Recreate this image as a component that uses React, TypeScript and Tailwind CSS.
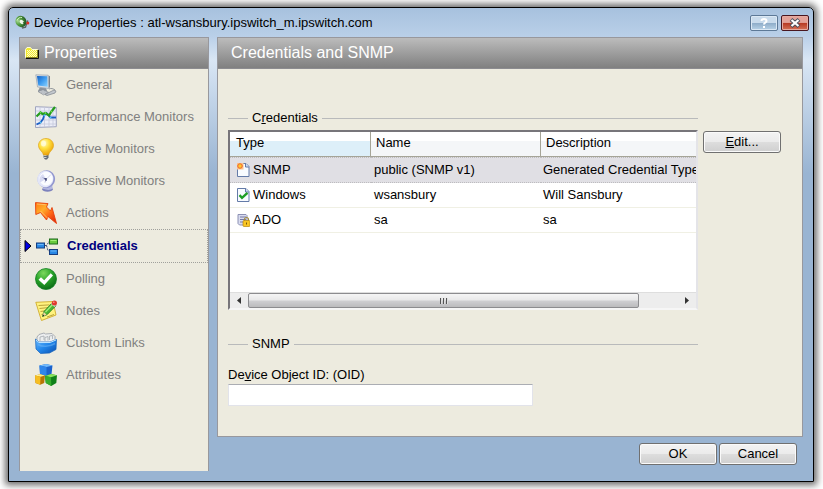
import type { ReactNode } from "react";

function AppIcon() {
  return (
    <svg className="h-[15px] w-[15px]" viewBox="0 0 15 15" aria-hidden="true">
      <defs>
        <radialGradient id="bell" cx="30%" cy="30%" r="80%">
          <stop offset="0" stopColor="#a8d894" />
          <stop offset="0.4" stopColor="#55a043" />
          <stop offset="1" stopColor="#1b4d1c" />
        </radialGradient>
      </defs>
      <ellipse cx="6" cy="6.500" rx="5.400" ry="5.800" transform="rotate(-35 6 6.500)" fill="url(#bell)" />
      <path d="M2 5.500C3 3 5 2 7 2.500" fill="none" stroke="#cfeec2" />
      <ellipse cx="6.800" cy="7" rx="2.400" ry="1.800" transform="rotate(35 6.800 7)" fill="#f0f8ec" />
      <path d="M8 7.500l2.500 1.500" stroke="#235c22" strokeWidth="1.200" />
      <path d="M7 13l3.500-.8L11.500 9l1.300-3.500" fill="none" stroke="#59645e" strokeWidth="1.300" />
      <circle cx="12.800" cy="8" r="1.500" fill="#e02c20" />
    </svg>
  );
}

function FolderIcon() {
  return (
    <svg className="h-3 w-[14px]" viewBox="0 0 14 12" aria-hidden="true">
      <path d="M13.500 3v8.500H1" fill="none" stroke="#111" />
      <path d="M.5 10.500v-8l1.500-2h3.500l1.500 2h5.500v8z" fill="#f2ea2e" stroke="#fdfdd8" />
      <path d="M2 3.500h10M2 5.500h10M2 7.500h10M2 9.500h10" stroke="#fffcc8" strokeDasharray="1 1" />
      <path d="M3 4.500h9M3 6.500h9M3 8.500h9" stroke="#fffcc8" strokeDasharray="1 1" />
      <path d="M1 10.500h11.500v-7.500" fill="none" stroke="#85801a" />
    </svg>
  );
}

function ComputerIcon() {
  return (
    <svg className="h-[22px] w-[22px]" viewBox="0 0 22 22" aria-hidden="true">
      <defs>
        <linearGradient id="screen" x1="0" y1="0" x2="1" y2="1">
          <stop offset="0" stopColor="#1461c4" />
          <stop offset="0.5" stopColor="#3f9df0" />
          <stop offset="1" stopColor="#8ed4ff" />
        </linearGradient>
      </defs>
      <path d="M5 13l6 1 1 3-4 2-5-2z" fill="#8b939c" />
      <path d="M13.500 1.500l1.500.8v11l-1.500 1z" fill="#76808b" />
      <path d="M.8.800l12.400.4.600 13.300L2.500 13z" fill="#d8dde4" stroke="#a1a9b3" strokeWidth=".8" />
      <path d="M2 2l10.300.3.400 10.500L3.300 11.500z" fill="url(#screen)" />
      <path d="M3 17.500l5-1.800 5.500 2.600-5 2.500z" fill="#d9dce0" stroke="#858b94" strokeWidth=".8" />
      <path d="M4.500 17.500l5 2.300M6 17l5 2.300M7.500 16.500l5 2.200" stroke="#9aa1aa" strokeWidth=".6" />
      <path d="M10 20.500l9-4.500 2 1-1 2-8 2.500z" fill="#c3c8ce" stroke="#868c94" strokeWidth=".8" />
      <path d="M14 15c2-1 4-.5 6 1" fill="none" stroke="#7d848c" strokeWidth=".8" />
    </svg>
  );
}

function ChartIcon() {
  return (
    <svg className="h-[22px] w-[22px]" viewBox="0 0 22 22" aria-hidden="true">
      <path d="M.5.700l20.800.8v19.200L.5 21.500z" fill="#eceef8" stroke="#9fa4be" />
      <path d="M5 1v20M9.500 1v20M14 1v20M18 1v20M1 5h20M1 9.500h20M1 14h20M1 18h20" stroke="#c5c8dc" strokeWidth=".8" />
      <path d="M1.500 18.500l4-2 2.500-3.500 1.500-4.500 2-1.500 4 4.500h5.500" fill="none" stroke="#185dc4" strokeWidth="1.800" />
      <path d="M1.500 10.500l4-4 2 1.500 3-1 3.500 2.500 2.500-4 3.500-4.500" fill="none" stroke="#259b1c" strokeWidth="2.200" />
      <g fill="#55c6f4">
        <circle cx="5.500" cy="16.500" r=".9" /><circle cx="9.500" cy="9.500" r=".9" /><circle cx="15.500" cy="11.500" r=".9" />
      </g>
      <g fill="#6ede4e">
        <circle cx="5.500" cy="6.500" r=".9" /><circle cx="10.500" cy="7" r=".9" /><circle cx="16.500" cy="5.500" r=".9" />
      </g>
    </svg>
  );
}

function BulbIcon() {
  return (
    <svg className="h-[22px] w-[22px]" viewBox="0 0 22 22" aria-hidden="true">
      <defs>
        <radialGradient id="glass" cx="38%" cy="28%" r="75%">
          <stop offset="0" stopColor="#fffbc8" />
          <stop offset="0.45" stopColor="#ffe03c" />
          <stop offset="1" stopColor="#eb9c06" />
        </radialGradient>
      </defs>
      <path d="M8.500 16h5v3.500l-1.500 2h-2l-1.500-2z" fill="#636b76" />
      <path d="M8.500 17.500h3M8.500 19.500h3" stroke="#d4d9df" strokeWidth=".9" />
      <path d="M11 .5c4.300 0 7.500 3 7.500 7 0 3.300-2.500 5-4 7.200-.6 1-.8 2.300-1.200 2.300H8.700c-.4 0-.6-1.300-1.200-2.300-1.500-2.200-4-3.900-4-7.200 0-4 3.200-7 7.500-7z" fill="url(#glass)" stroke="#dfa51a" strokeWidth=".7" />
      <ellipse cx="8.500" cy="5.500" rx="2.500" ry="3" fill="#fffde0" opacity=".75" />
    </svg>
  );
}

function DishIcon() {
  return (
    <svg className="h-[22px] w-[22px]" viewBox="0 0 22 22" aria-hidden="true">
      <ellipse cx="12.500" cy="19.200" rx="5.300" ry="2.500" fill="#7d82bd" />
      <path d="M8 16l9-1 .8 3.500c-2 1.800-6 1.800-9.800.3z" fill="#b4b8e0" />
      <ellipse cx="11.300" cy="9.200" rx="8.700" ry="9" transform="rotate(25 11.300 9.200)" fill="#9297cf" />
      <ellipse cx="10.300" cy="9" rx="8" ry="8.300" transform="rotate(25 10.300 9)" fill="#e3e6f8" />
      <ellipse cx="11" cy="8.600" rx="6.600" ry="6.900" transform="rotate(25 11 8.600)" fill="#fbfcff" />
      <path d="M5 12.500A6.500 6.500 0 0 1 8 4L11 9z" fill="#d9dcf3" />
      <path d="M11 9.500l5-5" stroke="#c9cce4" strokeWidth=".8" />
      <path d="M7.500 7.500l3.500 2-1 3" fill="none" stroke="#9a9ec8" strokeWidth=".8" />
      <path d="M9 8h2.800v2.800H10.500z" fill="#4d5280" />
    </svg>
  );
}

function BoltIcon() {
  return (
    <svg className="h-[22px] w-[22px]" viewBox="0 0 22 22" aria-hidden="true">
      <defs>
        <linearGradient id="bolt" x1="0" y1="0" x2="1" y2="1">
          <stop offset="0" stopColor="#ff7a10" />
          <stop offset="0.35" stopColor="#ffad2b" />
          <stop offset="0.6" stopColor="#ff6a17" />
          <stop offset="1" stopColor="#d91b08" />
        </linearGradient>
      </defs>
      <path d="M.5.600l12.500 1-1.500 3.400 4 4 1.500-3.500 4.500 16-8.500-7L11.500 18 5.500 10.500.8 12.500z" fill="url(#bolt)" stroke="#e5400b" strokeWidth=".9" />
      <path d="M2 2l8.500.7M5.500 9L12.500 16" fill="none" stroke="#ffc878" strokeWidth=".8" />
    </svg>
  );
}

function NodesIcon() {
  return (
    <svg className="h-[22px] w-[22px]" viewBox="0 0 22 22" aria-hidden="true">
      <path d="M9 10.500h1.500L13.500 6M10.500 10.500l1.500 5 2 1" fill="none" stroke="#3c4a72" strokeDasharray="2 1" />
      <rect x=".5" y="8" width="8" height="5" fill="#2987e5" stroke="#163e80" />
      <path d="M1.500 9.500h6" stroke="#6bb7f8" />
      <rect x="13.500" y="4" width="8" height="5" fill="#68ca3e" stroke="#1d6b1d" />
      <path d="M14.500 5.500h6" stroke="#a2ee77" />
      <rect x="13.500" y="14.500" width="8" height="5" fill="#2987e5" stroke="#163e80" />
      <path d="M14.500 16h6" stroke="#6bb7f8" />
    </svg>
  );
}

function CheckIcon() {
  return (
    <svg className="h-[22px] w-[22px]" viewBox="0 0 22 22" aria-hidden="true">
      <defs>
        <radialGradient id="ball" cx="38%" cy="22%" r="80%">
          <stop offset="0" stopColor="#7cd85e" />
          <stop offset="0.5" stopColor="#2ba52a" />
          <stop offset="1" stopColor="#0b6c16" />
        </radialGradient>
      </defs>
      <circle cx="11" cy="11" r="10.500" fill="url(#ball)" stroke="#128024" strokeWidth=".8" />
      <path d="M3.500 11.800L6 9.300l3.200 3 6.500-7 2.300 2.300-8.700 9.300z" fill="#fff" />
    </svg>
  );
}

function NoteIcon() {
  return (
    <svg className="h-[22px] w-[22px]" viewBox="0 0 22 22" aria-hidden="true">
      <path d="M.8 2.300L18 1.500 21 15 6.500 20.500 5 16z" fill="#fff27e" stroke="#cfac2c" strokeWidth=".9" />
      <path d="M3.500 5.500l11-.6M4.500 8.500l8.500-.9M5.500 11.500l5-.8M6.500 14.500l2-.5M12 17l7-2.500" stroke="#a88f29" strokeWidth=".8" />
      <path d="M7.500 16.500l1.500-5 8.500-9 3.500 3.200-9 9z" fill="#4bb733" stroke="#1d761c" strokeWidth=".8" />
      <path d="M10.500 12l7.500-8" stroke="#a3ee7b" strokeWidth="1.200" />
      <path d="M7.500 16.500l1.300-4.500 2.800 2.700z" fill="#eed7a6" />
      <path d="M7.500 16.500l.6-2 1.300 1.300z" fill="#222" />
      <path d="M16 3.800l1.500-1.500 3.400 3.200-1.500 1.500z" fill="#d7dcdf" />
      <ellipse cx="19.400" cy="2.900" rx="2.600" ry="2.500" fill="#e03a2d" />
      <circle cx="18.800" cy="2.200" r=".8" fill="#f9a095" />
    </svg>
  );
}

function BinIcon() {
  return (
    <svg className="h-[22px] w-[22px]" viewBox="0 0 22 22" aria-hidden="true">
      <defs>
        <linearGradient id="bin" x1="0" y1="0" x2="1" y2="1">
          <stop offset="0" stopColor="#6dbcff" />
          <stop offset="0.5" stopColor="#2186ea" />
          <stop offset="1" stopColor="#0b4ead" />
        </linearGradient>
      </defs>
      <path d="M2 5l2-2.500 5-1.500 1.500 1L17 1.500l3 3v7H2z" fill="#eceeef" stroke="#989da4" strokeWidth=".8" />
      <path d="M5 9V5l4-1v4M10 9V5.500l3-1v4M14.500 8V4l3-.5V7" fill="none" stroke="#a5a9af" strokeWidth=".8" />
      <path d="M.5 7L4 10h11l6.500-2.500-.5 10-6.500 3.500-9 .5L1 17z" fill="url(#bin)" stroke="#1763ba" strokeWidth=".7" />
      <path d="M1 8l3 2.500h11l6-2.500" fill="none" stroke="#bce3ff" />
      <path d="M3 12.500c4 2.500 11 2.500 17-1" fill="none" stroke="#73baf8" strokeWidth="1.500" opacity=".5" />
    </svg>
  );
}

function CubesIcon() {
  return (
    <svg className="h-[22px] w-[22px]" viewBox="0 0 22 22" aria-hidden="true">
      <path d="M4.500 1.500L11 0l6.500 1.500-1 8.500-5 2.500L5 10z" fill="#1b62cc" />
      <path d="M4.500 1.500L11 0l6.500 1.500-6 1.500z" fill="#73bafa" />
      <path d="M4.500 1.500l7 1.500v9.500L5 10z" fill="#2f86ea" />
      <path d="M0 11.500l5-1.300 5 1.300-.8 7.500-4 1.800L.5 19z" fill="#b87405" />
      <path d="M0 11.500l5-1.300 5 1.300-4.500 1.200z" fill="#fff08a" />
      <path d="M0 11.500l5.500 1.200-.3 8.100L.5 19z" fill="#f6be22" />
      <path d="M10 12l6-2 6 1.300-.7 7.700-5 3-5.500-3z" fill="#108018" />
      <path d="M10 12l6-2 6 1.300-6 2z" fill="#8be35c" />
      <path d="M10 12l6 1.300.3 8.700-5.500-3z" fill="#37ad2b" />
    </svg>
  );
}

function TypeIcon({ kind }: { kind: string }) {
  if (kind === "ADO") {
    return (
      <svg className="h-[14px] w-[13px] shrink-0" viewBox="0 0 13 14" aria-hidden="true">
        <path d="M1 1.500h8l1 1V12H2.500L1 10.500z" fill="#d9dcef" stroke="#8c90b4" />
        <path d="M3 4h6M3 6.500h6M3 9h4" stroke="#7479a4" />
        <path d="M7.500 8V6.500a2 2 0 0 1 4 0V8" fill="none" stroke="#a38c3d" strokeWidth="1.200" />
        <rect x="6" y="7.500" width="7" height="6" rx="1" fill="#f9c522" stroke="#b8880e" strokeWidth=".7" />
        <path d="M9.500 9.500v2" stroke="#775709" />
      </svg>
    );
  }
  return (
    <svg className="h-[14px] w-[13px] shrink-0" viewBox="0 0 13 14" aria-hidden="true">
      <path d="M.5.500h8.500l3 3v10H.5z" fill="#f8fbff" stroke="#647ba8" />
      <path d="M8.500.500v3.500H12" fill="#cfdcf2" stroke="#647ba8" />
      {kind === "SNMP" ? (
        <g>
          <path d="M0 0h6.500v6.500H0z" fill="#fbc58c" />
          <path d="M3 0v6M0 3h6M1 1l4 4M5 1L1 5" stroke="#ef7136" strokeWidth="1.400" />
          <circle cx="3" cy="3" r="1.700" fill="#ffc92c" />
        </g>
      ) : (
        <path d="M2.500 7.200l2.500 2.600 5.500-5" fill="none" stroke="#1e9e25" strokeWidth="2.400" />
      )}
    </svg>
  );
}

type NavItem = { label: string; icon: ReactNode; current?: boolean };

const navItems: NavItem[] = [
  { label: "General", icon: <ComputerIcon /> },
  { label: "Performance Monitors", icon: <ChartIcon /> },
  { label: "Active Monitors", icon: <BulbIcon /> },
  { label: "Passive Monitors", icon: <DishIcon /> },
  { label: "Actions", icon: <BoltIcon /> },
  { label: "Credentials", icon: <NodesIcon />, current: true },
  { label: "Polling", icon: <CheckIcon /> },
  { label: "Notes", icon: <NoteIcon /> },
  { label: "Custom Links", icon: <BinIcon /> },
  { label: "Attributes", icon: <CubesIcon /> },
];

const credentials = [
  { type: "SNMP", name: "public (SNMP v1)", description: "Generated Credential Type" },
  { type: "Windows", name: "wsansbury", description: "Will Sansbury" },
  { type: "ADO", name: "sa", description: "sa" },
];

function PushButton({ children }: { children: ReactNode }) {
  return (
    <button
      type="button"
      className="h-[22px] w-[78px] shrink-0 rounded-[3px] border border-[#707070] bg-[linear-gradient(#f3f3f3_0%,#ebebeb_48%,#dddddd_52%,#cfcfcf_100%)] text-center leading-5 shadow-[inset_0_0_0_1px_#fafafa]"
    >
      {children}
    </button>
  );
}

function GroupTitle({ children }: { children: ReactNode }) {
  return (
    <h2 className="flex h-[18px] items-center gap-1 leading-[18px] after:h-px after:flex-1 after:bg-[#b9babb] after:content-[''] before:h-px before:w-5 before:bg-[#b9babb] before:content-['']">
      <span>{children}</span>
    </h2>
  );
}

function PanelHeader({ children }: { children: ReactNode }) {
  return (
    <h1 className="flex h-[31px] items-center border-b border-[#8c8c90] bg-linear-to-b from-[#bcbcbc] to-[#808080] text-base text-white">
      {children}
    </h1>
  );
}

function Scrollbar() {
  return (
    <div className="flex h-4 border-t border-[#dedede] bg-[#ededed]">
      <button type="button" aria-label="Scroll left" className="flex w-[18px] items-center justify-center">
        <svg className="h-[7px] w-1" viewBox="0 0 4 7" aria-hidden="true"><path d="M4 0v7L0 3.500z" fill="#333" /></svg>
      </button>
      <div className="flex-1">
        <div className="flex h-[15px] w-[91%] items-center justify-center gap-px rounded-[2px] border border-[#8c8c8f] bg-[linear-gradient(#f5f5f5_0%,#e8e8e9_48%,#cfcfd2_52%,#bbbbbd_100%)]">
          <span className="h-[6px] w-[2px] border-r border-[#ddd] bg-[#555]" />
          <span className="h-[6px] w-[2px] border-r border-[#ddd] bg-[#555]" />
          <span className="h-[6px] w-[2px] border-r border-[#ddd] bg-[#555]" />
        </div>
      </div>
      <button type="button" aria-label="Scroll right" className="flex w-[18px] items-center justify-center">
        <svg className="h-[7px] w-1" viewBox="0 0 4 7" aria-hidden="true"><path d="M0 0v7l4-3.500z" fill="#333" /></svg>
      </button>
    </div>
  );
}

function CredentialTable() {
  return (
    <div className="mt-[3px] flex min-h-[180px] flex-col border-2 border-t-[#77757a] border-r-[#e4e4e8] border-b-[#f6f6f6] border-l-[#77757a] bg-white">
      <div className="flex-1 overflow-hidden">
        <table className="w-full table-fixed border-separate border-spacing-0 text-left leading-5 whitespace-nowrap">
          <thead>
            <tr>
              <th className="h-[25px] w-[141px] border-r border-b border-[#a5a497] bg-[linear-gradient(#fff_38%,#ddeff9_38%)] px-[6px] pb-[2px] font-normal">Type</th>
              <th className="h-[25px] w-[170px] border-r border-b border-[#a5a497] bg-[linear-gradient(#fff_38%,#f4f6f8_38%)] px-[5px] pb-[2px] font-normal">Name</th>
              <th className="h-[25px] border-b border-[#a5a497] bg-[linear-gradient(#fff_38%,#f4f6f8_38%)] px-[5px] pb-[2px] font-normal">Description</th>
            </tr>
          </thead>
          <tbody>
            {credentials.map((row, i) => {
              const tone = i === 0 ? "h-[26px] border-y border-dotted border-[#bdbcbf] bg-[#e0dfe4]" : "h-[25px] border-b border-[#f0f0e4]";
              return (
                <tr key={row.type}>
                  <td className={`${tone} pl-[7px]`}>
                    <span className="flex items-center gap-[3px]">
                      <TypeIcon kind={row.type} />
                      {row.type}
                    </span>
                  </td>
                  <td className={`${tone} pl-[3px]`}>{row.name}</td>
                  <td className={`${tone} pl-[2px]`}>{row.description}</td>
                </tr>
              );
            })}
          </tbody>
        </table>
      </div>
      <Scrollbar />
    </div>
  );
}

export default function App() {
  return (
    <div className="flex min-h-screen bg-white pt-[7px] pr-[9px] pb-[7px] pl-2 font-['Liberation_Sans',Arial,sans-serif] text-sm text-black">
      <div className="flex flex-1 flex-col rounded-t-[5px] border border-black bg-[linear-gradient(#a7c1de_0px,#b9cfe8_28px,#d9e6f4_52px,#c3d5e9_90px,#99b4d2_165px)] shadow-[0_0_7px_3px_rgba(0,0,0,0.6)]">
        <header className="flex h-[29px] items-center pr-1 pl-[6px]">
          <AppIcon />
          <span className="flex-1 pl-1 text-[13px] leading-5">Device Properties : atl-wsansbury.ipswitch_m.ipswitch.com</span>
          <div className="flex gap-[3px]">
            <button type="button" aria-label="Help" className="flex h-4 w-[28px] items-center justify-center rounded-[2px] border border-[#5d7997] bg-[linear-gradient(#c9dbec_48%,#8fadc9_52%,#b9d3e8)] shadow-[inset_0_0_0_1px_#dbe8f4]">
              <svg className="h-[10px] w-2" viewBox="0 0 8 10" aria-hidden="true">
                <path d="M1.500 3Q1.500 1 4 1t2.500 2C6.500 4.500 4 4.500 4 6.500" fill="none" stroke="#fff" strokeWidth="2" />
                <path d="M3 8h2v2H3z" fill="#fff" />
              </svg>
            </button>
            <button type="button" aria-label="Close" className="flex h-4 w-[28px] items-center justify-center rounded-[2px] border border-[#49161f] bg-[linear-gradient(#e3a299_46%,#b83a24_52%,#d57258)] shadow-[inset_0_0_0_1px_#e6aaa0]">
              <svg className="h-[10px] w-3" viewBox="0 0 12 10" aria-hidden="true">
                <path d="M2 1.500l8 7M10 1.500l-8 7" stroke="#4b4f5c" strokeWidth="4" />
                <path d="M2.500 2l7 6M9.500 2l-7 6" stroke="#fff" strokeWidth="2.200" />
              </svg>
            </button>
          </div>
        </header>

        <div className="flex flex-1 gap-2 px-[10px] pb-[10px]">
          <aside className="w-[190px] shrink-0 border border-b-0 border-[#98989d] bg-[#edebdf]">
            <PanelHeader>
              <span className="flex items-center gap-[5px] pl-[5px]">
                <FolderIcon />
                Properties
              </span>
            </PanelHeader>
            <nav>
              {navItems.map((item) => (
                <a
                  key={item.label}
                  href="#"
                  aria-current={item.current ? "page" : undefined}
                  className={
                    item.current
                      ? "flex h-[34px] items-center border border-dotted border-[#a0a09c] pr-2 pl-[3px] font-bold text-[#000080]"
                      : "flex h-8 items-center pr-2 pl-[15px] text-[#808080]"
                  }
                >
                  {item.current && (
                    <svg className="mr-1 h-3 w-2" viewBox="0 0 8 12" aria-hidden="true">
                      <path d="M1 .5v11l6-5.500z" fill="#0000e8" stroke="#000" />
                    </svg>
                  )}
                  {item.icon}
                  <span className="pl-[9px] text-[13px] leading-5">{item.label}</span>
                </a>
              ))}
            </nav>
          </aside>

          <div className="flex min-w-0 flex-1 flex-col">
            <main className="flex-1 border border-[#98989d] bg-[#edebdf]">
              <PanelHeader>
                <span className="pl-[13px]">Credentials and SNMP</span>
              </PanelHeader>
              <div className="flex gap-[5px] pt-10 pr-[21px] pl-[10px] text-[13px]">
                <div className="min-w-0 flex-1">
                  <GroupTitle>C<u>r</u>edentials</GroupTitle>
                  <CredentialTable />
                  <div className="mt-[25px]">
                    <GroupTitle>SNMP</GroupTitle>
                  </div>
                  <label htmlFor="oid" className="mt-[13px] block leading-[18px]">De<u>v</u>ice Object ID: (OID)</label>
                  <input id="oid" type="text" className="block h-[22px] w-[305px] border border-[#e2e3ea] border-t-[#abadb3] bg-white px-1" />
                </div>
                <div className="pt-[22px]">
                  <PushButton><u>E</u>dit...</PushButton>
                </div>
              </div>
            </main>
            <footer className="flex justify-end gap-[2px] pt-[6px] pr-[6px] pb-[6px] text-[13px]">
              <PushButton>OK</PushButton>
              <PushButton>Cancel</PushButton>
            </footer>
          </div>
        </div>
      </div>
    </div>
  );
}
